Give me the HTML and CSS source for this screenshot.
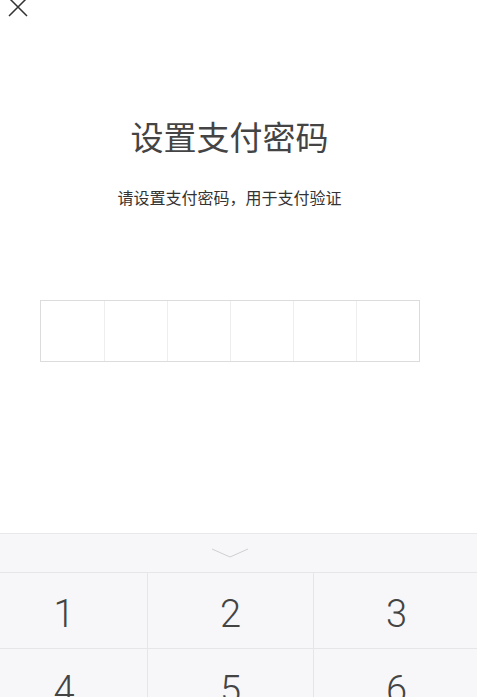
FILE: index.html
```html
<!DOCTYPE html>
<html lang="zh-CN">
<head>
  <meta charset="UTF-8">
  <meta name="viewport" content="width=device-width, initial-scale=1.0">
  <title>设置支付密码</title>
  <link rel="stylesheet" href="styles.css">
</head>
<body>
  <div class="page">
    <div class="header">
      <svg class="close" width="20" height="20" viewBox="0 0 20 20">
        <path d="M1 1 L19 19 M19 1 L1 19" stroke="#333" stroke-width="1.5" fill="none"/>
      </svg>
    </div>

    <h1 class="title">设置支付密码</h1>
    <p class="subtitle">请设置支付密码，用于支付验证</p>

    <div class="code-box">
      <div class="cell"></div>
      <div class="cell"></div>
      <div class="cell"></div>
      <div class="cell"></div>
      <div class="cell"></div>
      <div class="cell"></div>
    </div>
  </div>

  <div class="keyboard">
    <div class="kb-toggle">
      <svg width="36" height="10" viewBox="0 0 36 10">
        <polyline points="0,1 18,9 36,1" stroke="#cfcfd3" stroke-width="1" fill="none"/>
      </svg>
    </div>
    <div class="keys">
      <div class="key">1</div>
      <div class="key">2</div>
      <div class="key">3</div>
      <div class="key">4</div>
      <div class="key">5</div>
      <div class="key">6</div>
      <div class="key">7</div>
      <div class="key">8</div>
      <div class="key">9</div>
      <div class="key blank"></div>
      <div class="key">0</div>
      <div class="key">⌫</div>
    </div>
  </div>
</body>
</html>
```

FILE: styles.css
```css
html, body {
  margin: 0;
  padding: 0;
  background: #fff;
  font-family: "Noto Sans CJK SC", "Noto Sans", sans-serif;
  overflow: hidden;
}
.page {
  width: 459px;
  text-align: center;
}
.header {
  height: 17px;
  text-align: left;
}
.close {
  display: block;
  margin: -3px 0 0 8px;
}
.title {
  margin: 102px 0 0;
  font-size: 33px;
  line-height: 40px;
  font-weight: 400;
  color: #444;
}
.subtitle {
  margin: 29px 0 0;
  font-size: 16px;
  line-height: 24px;
  color: #333;
}
.code-box {
  display: grid;
  grid-template-columns: repeat(6, 1fr);
  width: 380px;
  height: 62px;
  margin: 91px auto 0;
  border: 1px solid #dcdcdc;
  box-sizing: border-box;
}
.cell + .cell {
  border-left: 1px solid #eeeeee;
}
.keyboard {
  margin: 171px 0 0 -19px;
  width: 498px;
  background: #f7f7f9;
  border-top: 1px solid #e9e9ec;
}
.kb-toggle {
  display: flex;
  justify-content: center;
  align-items: center;
  height: 38px;
  border-bottom: 1px solid #e6e6e9;
}
.keys {
  display: grid;
  grid-template-columns: repeat(3, 166px);
}
.key {
  display: flex;
  justify-content: center;
  align-items: center;
  height: 76px;
  padding-top: 6px;
  box-sizing: border-box;
  border-bottom: 1px solid #e6e6e9;
  font-family: Roboto, "Noto Sans", sans-serif;
  font-weight: 300;
  font-size: 38px;
  color: #444;
}
.key:not(:nth-child(3n+1)) {
  border-left: 1px solid #e6e6e9;
}
```
